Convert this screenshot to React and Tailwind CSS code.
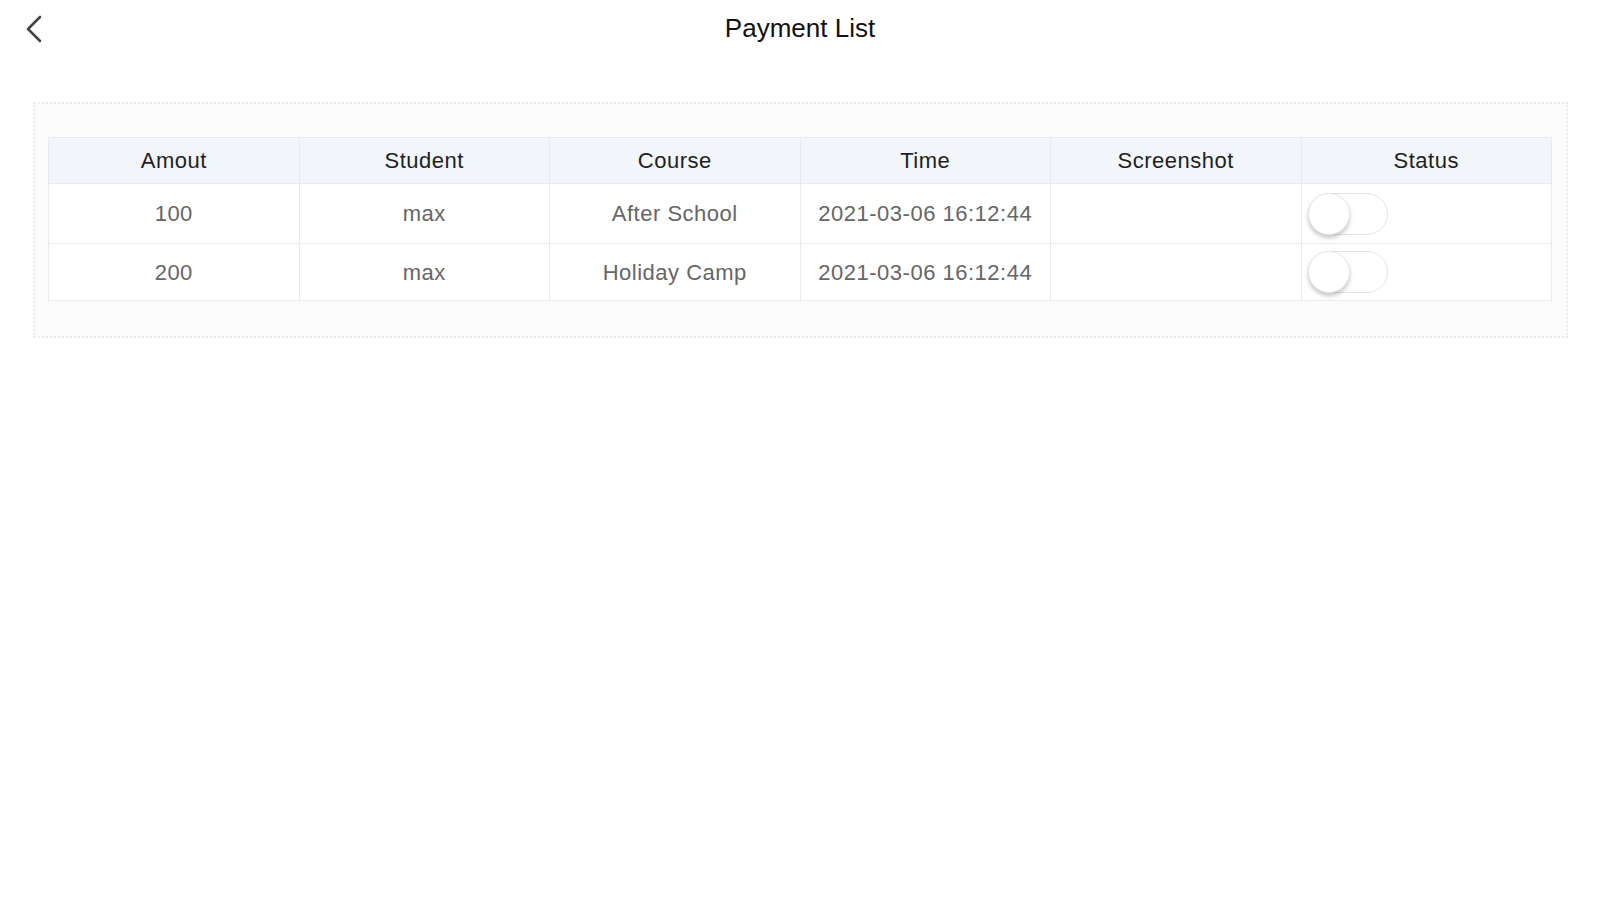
import React from 'react';

const rows = [
  { amount: '100', student: 'max', course: 'After School', time: '2021-03-06 16:12:44' },
  { amount: '200', student: 'max', course: 'Holiday Camp', time: '2021-03-06 16:12:44' },
];

const headers = ['Amout', 'Student', 'Course', 'Time', 'Screenshot', 'Status'];

function Toggle() {
  return (
    <div className="relative w-[80px] h-[42px] rounded-full border border-[#e4e4e4] bg-white">
      <div className="absolute left-[-1px] top-[-1px] w-[42px] h-[42px] rounded-full bg-white shadow-[0_3px_4px_rgba(0,0,0,0.22)] border border-[#e8e8e8]" />
    </div>
  );
}

export default function App() {
  return (
    <div className="min-h-screen bg-white font-['Liberation_Sans',Arial,sans-serif]">
      <div className="relative h-[58px] flex items-center justify-center">
        <button className="absolute left-[22px] top-[14px] w-[24px] h-[30px] flex items-center justify-center">
          <svg width="20" height="30" viewBox="0 0 20 30" fill="none">
            <path d="M16 3 L4 15 L16 27" stroke="#444" strokeWidth="2.6" strokeLinecap="round" strokeLinejoin="round" />
          </svg>
        </button>
        <h1 className="text-[26px] text-[#111] mt-[-2px]">Payment List</h1>
      </div>

      <div className="mx-[33px] mt-[44px] w-[1535px] border-2 border-dotted border-[#ececec] bg-[#fcfcfc] pt-[33px] pb-[35px] pl-[13px] pr-[14px]">
        <table className="w-[1504px] table-fixed border-collapse bg-white">
          <thead>
            <tr className="bg-[#f2f5f9] h-[46px]">
              {headers.map(h => (
                <th key={h} className="border border-[#e6e9ee] text-[22px] tracking-[0.5px] font-normal text-[#1f1f1f] text-center">{h}</th>
              ))}
            </tr>
          </thead>
          <tbody>
            {rows.map((r, i) => (
              <tr key={i} className={i === 0 ? 'h-[60px]' : 'h-[57px]'}>
                <td className="border border-[#e9ebef] text-center text-[22px] tracking-[0.5px] text-[#666]">{r.amount}</td>
                <td className="border border-[#e9ebef] text-center text-[22px] tracking-[0.5px] text-[#666]">{r.student}</td>
                <td className="border border-[#e9ebef] text-center text-[22px] tracking-[0.5px] text-[#666]">{r.course}</td>
                <td className="border border-[#e9ebef] text-center text-[22px] tracking-[0.5px] text-[#666]">{r.time}</td>
                <td className="border border-[#e9ebef]"></td>
                <td className="border border-[#e9ebef] pl-[6px]"><Toggle /></td>
              </tr>
            ))}
          </tbody>
        </table>
      </div>
    </div>
  );
}
